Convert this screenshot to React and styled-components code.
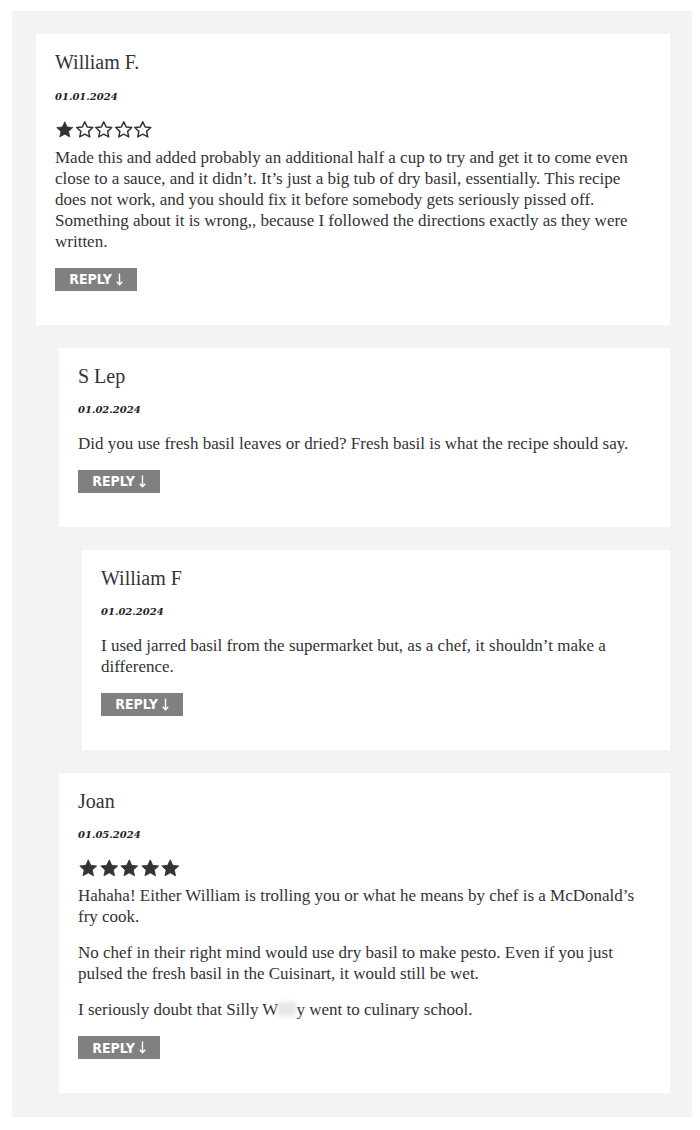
import React from 'react'
import styled, { createGlobalStyle } from 'styled-components'

const GlobalStyle = createGlobalStyle`
  html, body {
    margin: 0;
    padding: 0;
    background: #fff;
  }
  body {
    font-family: "Liberation Serif", serif;
    color: #333;
  }
`

/**
 * styles
 */
const Page = styled.div`
  padding: 11px 8px 12px 12px;
`

const Thread = styled.section`
  background: #f3f3f3;
  padding: 23px 22px 24px 24px;
  display: flex;
  flex-direction: column;
  gap: 23px;
`

const Card = styled.article`
  background: #fff;
  margin-left: ${p => p.$depth * 23}px;
  padding: 16px 19px 34px 19px;
`

const Name = styled.h3`
  margin: 0;
  font-family: "Liberation Serif", serif;
  font-weight: 400;
  font-size: 20px;
  line-height: 24px;
  color: #333;
`

const DateLine = styled.div`
  margin-top: 14.5px;
  font-family: "DejaVu Serif", serif;
  font-style: italic;
  font-weight: 700;
  font-size: 10px;
  line-height: 16px;
  color: #222;
`

const StarRow = styled.div`
  margin-top: 8px;
  height: 34px;
  display: flex;
  align-items: center;
`

const Body = styled.div`
  margin-top: ${p => (p.$afterStars ? 0 : 14.5)}px;
`

const Para = styled.p`
  margin: 0 0 15px;
  font-size: 17px;
  line-height: 21px;
  color: #333;

  &:last-child {
    margin-bottom: 0;
  }
`

const Blur = styled.span`
  display: inline-block;
  width: 18px;
  height: 14px;
  vertical-align: -1px;
  background: #e6e6e6;
  filter: blur(2px);
`

const ReplyButton = styled.button`
  margin-top: 16px;
  width: 82px;
  height: 23px;
  border: none;
  background: #808080;
  color: #fff;
  font-family: "DejaVu Sans Condensed", "DejaVu Sans", sans-serif;
  font-weight: 700;
  font-size: 14px;
  padding: 0;
  display: flex;
  align-items: center;
  justify-content: center;
  gap: 4px;
  cursor: pointer;
`

const Star = ({ filled, size }) => (
  <svg width={size} height={size} viewBox="0 0 20 20">
    <path
      d="M10 1.8l2.45 5.3 5.8.65-4.3 3.95 1.2 5.7L10 14.5l-5.15 2.9 1.2-5.7L1.75 7.75l5.8-.65z"
      fill={filled ? '#333' : 'none'}
      stroke="#333"
      strokeWidth={filled ? 0.8 : 1.5}
      strokeLinejoin="round"
    />
  </svg>
)

const Stars = ({ rating, size }) => (
  <StarRow>
    {[0, 1, 2, 3, 4].map(i => (
      <Star key={i} filled={i < rating} size={size} />
    ))}
  </StarRow>
)

const Arrow = () => (
  <svg width="7" height="13" viewBox="0 0 7 13">
    <path d="M3.5 0.5v11M0.8 8.8l2.7 3 2.7-3" fill="none" stroke="#fff" strokeWidth="1.4" />
  </svg>
)

const comments = [
  {
    name: 'William F.',
    date: '01.01.2024',
    depth: 0,
    rating: 1,
    starSize: 19.5,
    paras: [
      'Made this and added probably an additional half a cup to try and get it to come even close to a sauce, and it didn\u2019t. It\u2019s just a big tub of dry basil, essentially. This recipe does not work, and you should fix it before somebody gets seriously pissed off. Something about it is wrong,, because I followed the directions exactly as they were written.'
    ]
  },
  {
    name: 'S Lep',
    date: '01.02.2024',
    depth: 1,
    paras: ['Did you use fresh basil leaves or dried? Fresh basil is what the recipe should say.']
  },
  {
    name: 'William F',
    date: '01.02.2024',
    depth: 2,
    paras: ['I used jarred basil from the supermarket but, as a chef, it shouldn\u2019t make a difference.']
  },
  {
    name: 'Joan',
    date: '01.05.2024',
    depth: 1,
    rating: 5,
    starSize: 20.5,
    paras: [
      'Hahaha! Either William is trolling you or what he means by chef is a McDonald\u2019s fry cook.',
      'No chef in their right mind would use dry basil to make pesto. Even if you just pulsed the fresh basil in the Cuisinart, it would still be wet.',
      <>I seriously doubt that Silly W<Blur />y went to culinary school.</>
    ]
  }
]

const Comment = ({ comment }) => {
  const { name, date, depth, rating, starSize, paras } = comment
  return (
    <Card $depth={depth}>
      <Name>{name}</Name>
      <DateLine>{date}</DateLine>
      {rating ? <Stars rating={rating} size={starSize} /> : null}
      <Body $afterStars={!!rating}>
        {paras.map((p, i) => <Para key={i}>{p}</Para>)}
      </Body>
      <ReplyButton>REPLY <Arrow /></ReplyButton>
    </Card>
  )
}

export default function App () {
  return (
    <>
      <GlobalStyle />
      <Page>
        <Thread>
          {comments.map((c, i) => <Comment key={i} comment={c} />)}
        </Thread>
      </Page>
    </>
  )
}
